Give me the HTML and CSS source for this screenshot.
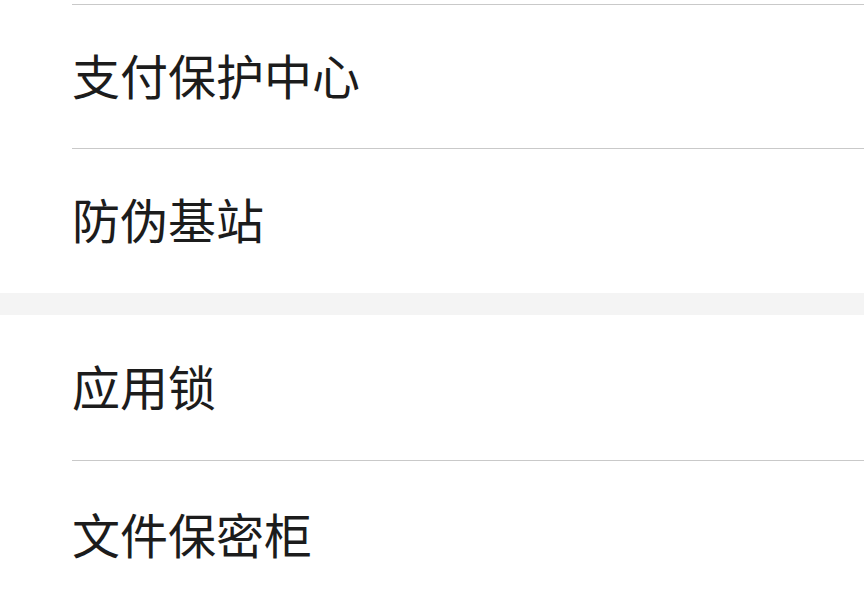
FILE: index.html
```html
<!DOCTYPE html>
<html lang="zh-CN">
<head>
<meta charset="utf-8">
<title>设置</title>
<link rel="stylesheet" href="styles.css">
</head>
<body>
<div class="stub"></div>
<div class="group">
  <div class="item item-a"><span class="label">支付保护中心</span></div>
  <div class="item item-b"><span class="label">防伪基站</span></div>
</div>
<div class="gap"></div>
<div class="group">
  <div class="item item-c"><span class="label">应用锁</span></div>
  <div class="item item-d"><span class="label">文件保密柜</span></div>
</div>
</body>
</html>
```
FILE: styles.css
```css
html, body {
  margin: 0;
  padding: 0;
  background: #ffffff;
}
body {
  width: 864px;
  height: 600px;
  overflow: hidden;
  font-family: "Noto Sans CJK SC", "Noto Sans", sans-serif;
  color: #1c1c1c;
}
.stub {
  height: 4px;
}
.group {
  background: #ffffff;
}
.item {
  margin-left: 72px;
  padding-bottom: 6px;
  display: flex;
  align-items: center;
  border-top: 1px solid #c9c9c9;
  box-sizing: border-box;
}
.item-a { height: 144px; }
.item-b { height: 145px; }
.item-c { height: 145px; border-top: none; }
.item-d { height: 150px; }
.label {
  font-size: 48px;
  line-height: 1;
  letter-spacing: 0;
  font-weight: 400;
}
.gap {
  height: 22px;
  background: #f4f4f4;
}
```
